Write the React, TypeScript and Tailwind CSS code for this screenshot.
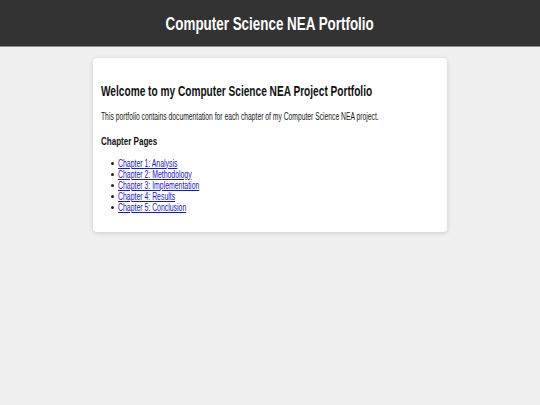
import React from 'react';

// Chapter links for the portfolio index
const chapters = [
  { id: 1, title: 'Chapter 1: Analysis' },
  { id: 2, title: 'Chapter 2: Methodology' },
  { id: 3, title: 'Chapter 3: Implementation' },
  { id: 4, title: 'Chapter 4: Results' },
  { id: 5, title: 'Chapter 5: Conclusion' },
];

const App: React.FC = () => {
  return (
    <div className="min-h-screen bg-[#f0f0f0] font-['Liberation_Sans',Arial,sans-serif] text-[#111] antialiased">
      <header className="h-[46px] bg-[#333333] flex items-center justify-center pt-[1px] shadow-[0_1px_0_#8a8a8a]">
        <h1 className="text-white text-[18px] leading-[20px] font-bold whitespace-nowrap scale-x-[0.745]">
          Computer Science NEA Portfolio
        </h1>
      </header>

      <main className="w-[354px] mx-auto mt-[12px] bg-white rounded-[4px] shadow-[0_1px_5px_rgba(0,0,0,0.16)] px-[8px] pt-[24px] pb-[19px]">
        <h2 className="text-[15px] leading-[18px] font-bold whitespace-nowrap origin-left scale-x-[0.675]">
          Welcome to my Computer Science NEA Project Portfolio
        </h2>
        <p className="text-[10px] leading-[12px] mt-[10.5px] whitespace-nowrap origin-left scale-x-[0.675] text-[#1a1a1a]">
          This portfolio contains documentation for each chapter of my Computer Science NEA project.
        </p>
        <h3 className="text-[11px] leading-[13px] font-bold mt-[12px] whitespace-nowrap origin-left scale-x-[0.73]">
          Chapter Pages
        </h3>
        <ul className="mt-[10px] text-[10px] leading-[11px]">
          {chapters.map(ch => (
            <li key={ch.id} className="flex items-center">
              <span className="ml-[10px] mr-[4px] w-[3px] h-[3px] rounded-full bg-[#222] mt-[1px]" />
              <a
                href={`#chapter${ch.id}`}
                className="text-[#1515e0] underline whitespace-nowrap origin-left scale-x-[0.69]"
              >
                {ch.title}
              </a>
            </li>
          ))}
        </ul>
      </main>
    </div>
  );
};

export default App;
